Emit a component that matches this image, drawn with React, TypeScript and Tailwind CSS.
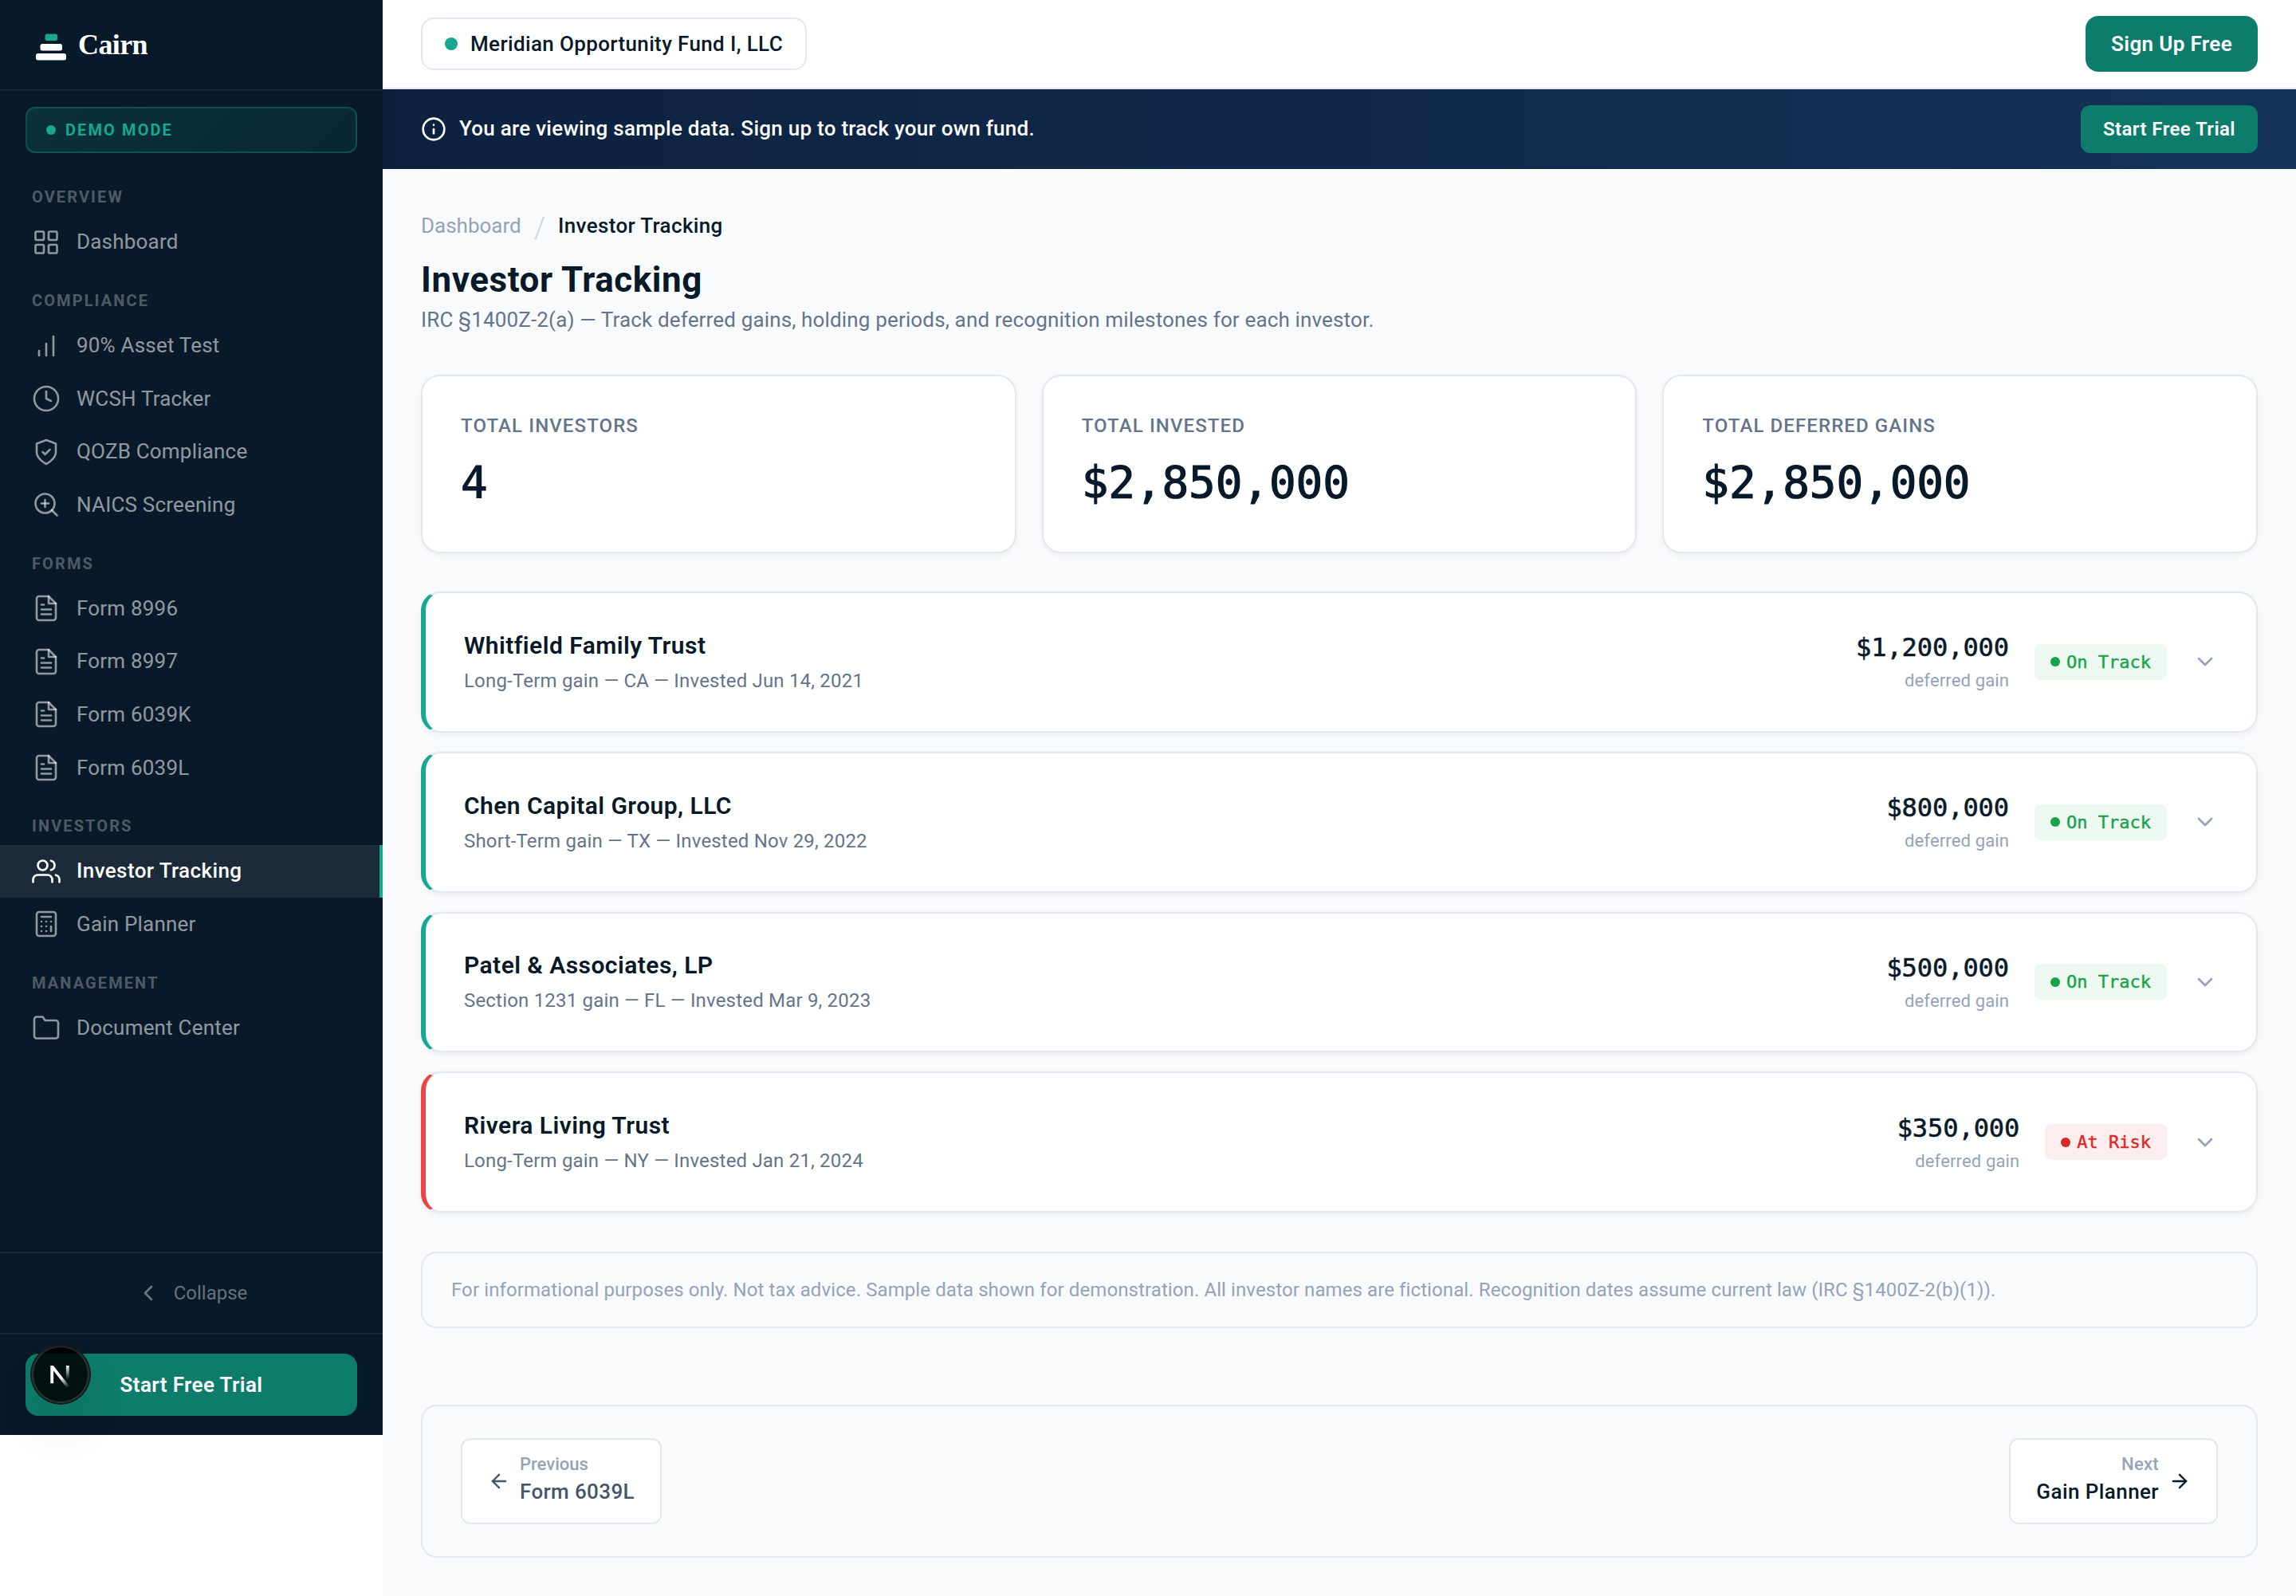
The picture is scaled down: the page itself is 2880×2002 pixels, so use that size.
import React, { useState } from "react";

type NavItem = {
  label: string;
  icon: React.ReactNode;
};

type NavSection = {
  title: string;
  items: NavItem[];
};

type Investor = {
  name: string;
  details: string;
  amount: string;
  status: "On Track" | "At Risk";
};

type IconProps = {
  children: React.ReactNode;
  className?: string;
  strokeWidth?: number;
};

const Icon = ({ children, className = "size-9", strokeWidth = 1.75 }: IconProps) => (
  <svg
    viewBox="0 0 24 24"
    fill="none"
    stroke="currentColor"
    strokeWidth={strokeWidth}
    strokeLinecap="round"
    strokeLinejoin="round"
    className={`shrink-0 ${className}`}
  >
    {children}
  </svg>
);

const FormIcon = () => (
  <Icon>
    <path d="M14 2H6a2 2 0 0 0-2 2v16a2 2 0 0 0 2 2h12a2 2 0 0 0 2-2V8z" />
    <polyline points="14 2 14 8 20 8" />
    <line x1="16" y1="13" x2="8" y2="13" />
    <line x1="16" y1="17" x2="8" y2="17" />
    <line x1="10" y1="9" x2="8" y2="9" />
  </Icon>
);

const sections: NavSection[] = [
  {
    title: "OVERVIEW",
    items: [
      {
        label: "Dashboard",
        icon: (
          <Icon>
            <rect x="3" y="3" width="7" height="7" rx="1" />
            <rect x="14" y="3" width="7" height="7" rx="1" />
            <rect x="3" y="14" width="7" height="7" rx="1" />
            <rect x="14" y="14" width="7" height="7" rx="1" />
          </Icon>
        ),
      },
    ],
  },
  {
    title: "COMPLIANCE",
    items: [
      {
        label: "90% Asset Test",
        icon: (
          <Icon>
            <line x1="12" y1="20" x2="12" y2="10" />
            <line x1="18" y1="20" x2="18" y2="4" />
            <line x1="6" y1="20" x2="6" y2="16" />
          </Icon>
        ),
      },
      {
        label: "WCSH Tracker",
        icon: (
          <Icon>
            <circle cx="12" cy="12" r="10" />
            <polyline points="12 6 12 12 16 14" />
          </Icon>
        ),
      },
      {
        label: "QOZB Compliance",
        icon: (
          <Icon>
            <path d="M12 22s8-4 8-10V5l-8-3-8 3v7c0 6 8 10 8 10z" />
            <path d="M9 12l2 2 4-4" />
          </Icon>
        ),
      },
      {
        label: "NAICS Screening",
        icon: (
          <Icon>
            <circle cx="11" cy="11" r="8" />
            <line x1="21" y1="21" x2="16.65" y2="16.65" />
            <line x1="11" y1="8" x2="11" y2="14" />
            <line x1="8" y1="11" x2="14" y2="11" />
          </Icon>
        ),
      },
    ],
  },
  {
    title: "FORMS",
    items: [
      { label: "Form 8996", icon: <FormIcon /> },
      { label: "Form 8997", icon: <FormIcon /> },
      { label: "Form 6039K", icon: <FormIcon /> },
      { label: "Form 6039L", icon: <FormIcon /> },
    ],
  },
  {
    title: "INVESTORS",
    items: [
      {
        label: "Investor Tracking",
        icon: (
          <Icon>
            <path d="M17 21v-2a4 4 0 0 0-4-4H5a4 4 0 0 0-4 4v2" />
            <circle cx="9" cy="7" r="4" />
            <path d="M23 21v-2a4 4 0 0 0-3-3.87" />
            <path d="M16 3.13a4 4 0 0 1 0 7.75" />
          </Icon>
        ),
      },
      {
        label: "Gain Planner",
        icon: (
          <Icon>
            <rect x="4" y="2" width="16" height="20" rx="2" />
            <line x1="8" y1="6" x2="16" y2="6" />
            <line x1="16" y1="14" x2="16" y2="18" />
            <path d="M16 10h.01M12 10h.01M8 10h.01M12 14h.01M8 14h.01M12 18h.01M8 18h.01" />
          </Icon>
        ),
      },
    ],
  },
  {
    title: "MANAGEMENT",
    items: [
      {
        label: "Document Center",
        icon: (
          <Icon>
            <path d="M22 19a2 2 0 0 1-2 2H4a2 2 0 0 1-2-2V5a2 2 0 0 1 2-2h5l2 3h9a2 2 0 0 1 2 2z" />
          </Icon>
        ),
      },
    ],
  },
];

const stats = [
  { label: "TOTAL INVESTORS", value: "4" },
  { label: "TOTAL INVESTED", value: "$2,850,000" },
  { label: "TOTAL DEFERRED GAINS", value: "$2,850,000" },
];

const investors: Investor[] = [
  {
    name: "Whitfield Family Trust",
    details: "Long-Term gain — CA — Invested Jun 14, 2021",
    amount: "$1,200,000",
    status: "On Track",
  },
  {
    name: "Chen Capital Group, LLC",
    details: "Short-Term gain — TX — Invested Nov 29, 2022",
    amount: "$800,000",
    status: "On Track",
  },
  {
    name: "Patel & Associates, LP",
    details: "Section 1231 gain — FL — Invested Mar 9, 2023",
    amount: "$500,000",
    status: "On Track",
  },
  {
    name: "Rivera Living Trust",
    details: "Long-Term gain — NY — Invested Jan 21, 2024",
    amount: "$350,000",
    status: "At Risk",
  },
];

const DevBadge = () => (
  <div className="absolute left-10 top-[1688px] size-[72px] rounded-full bg-black/85 shadow-[0_0_0_2px_#171717,inset_0_0_0_2px_rgba(255,255,255,0.14),0_32px_64px_-16px_rgba(0,0,0,0.24)]">
    <svg viewBox="0 0 72 72" fill="none" strokeWidth="3.8" className="size-full">
      <defs>
        <linearGradient id="diag" gradientUnits="userSpaceOnUse" x1="37" y1="40" x2="46" y2="52">
          <stop stopColor="#fff" />
          <stop offset="1" stopColor="#fff" stopOpacity="0" />
        </linearGradient>
        <linearGradient id="bar" gradientUnits="userSpaceOnUse" x1="45" y1="25" x2="45" y2="42">
          <stop stopColor="#fff" />
          <stop offset="1" stopColor="#fff" stopOpacity="0" />
        </linearGradient>
      </defs>
      <path d="M25.2 47.2V25" stroke="#fff" />
      <path d="M25.2 25.8L45.6 52" stroke="url(#diag)" />
      <path d="M44.8 25V42" stroke="url(#bar)" />
    </svg>
  </div>
);

const Sidebar = () => {
  const [active, setActive] = useState("Investor Tracking");

  return (
    <aside className="relative flex h-[1800px] w-[480px] shrink-0 flex-col bg-[#081929]">
      <div className="flex h-[114px] items-center gap-[14px] border-b-2 border-white/6 pl-11">
        <svg viewBox="0 0 40 36" className="mt-1 h-9 w-10">
          <rect x="12.5" y="2.5" width="15.5" height="8.5" rx="2.5" fill="#16a890" />
          <rect x="6.5" y="15" width="27.5" height="8.5" rx="2.5" fill="#fff" />
          <rect x="1" y="27" width="38" height="8.5" rx="2.5" fill="#fff" />
        </svg>
        <span className="font-['Liberation_Serif',serif] text-4xl font-bold tracking-[-0.6px] text-white">
          Cairn
        </span>
      </div>

      <div className="mx-8 mt-5 flex h-[58px] shrink-0 items-center gap-3 rounded-xl border-2 border-[#16a890]/30 bg-linear-135 from-[#16a890]/18 to-[#16a890]/10 pl-6">
        <span className="size-3 rounded-full bg-[#16a890]" />
        <span className="text-xl font-bold tracking-[2.1px] text-[#16a890]">DEMO MODE</span>
      </div>

      <nav className="mt-[15.4px]">
        {sections.map((section) => (
          <div key={section.title}>
            <p className="pt-6 pb-1.5 pl-10 text-xl leading-[33.2px] font-bold tracking-[2.1px] text-white/30">
              {section.title}
            </p>
            {section.items.map((item) => (
              <button
                key={item.label}
                type="button"
                onClick={() => setActive(item.label)}
                className={`flex h-[66.6px] w-full items-center gap-5 border-r-4 pl-10 text-[26px] ${
                  active === item.label
                    ? "border-[#16a890] bg-white/8 font-medium tracking-[0.4px] text-white"
                    : "border-transparent tracking-[0.2px] text-white/55"
                }`}
              >
                {item.icon}
                {item.label}
              </button>
            ))}
          </div>
        ))}
      </nav>

      <button
        type="button"
        className="mt-auto flex h-[102px] items-center justify-center gap-4 border-t-2 border-white/6 text-2xl text-white/40"
      >
        <Icon className="size-8" strokeWidth={2}>
          <polyline points="15 18 9 12 15 6" />
        </Icon>
        Collapse
      </button>
      <div className="border-t-2 border-white/6 px-8 py-6">
        <button
          type="button"
          className="h-[78px] w-full rounded-2xl bg-[#0e7c6b] text-[26px] font-semibold tracking-[0.4px] text-white"
        >
          Start Free Trial
        </button>
      </div>
      <DevBadge />
    </aside>
  );
};

const InvestorCard = ({ investor }: { investor: Investor }) => {
  const onTrack = investor.status === "On Track";

  return (
    <div
      className={`flex h-[176.8px] items-center rounded-3xl border-2 border-l-[6px] border-[#e2e8f0] bg-white px-12 shadow-[0_2px_6px_rgba(10,25,41,0.06)] ${
        onTrack ? "border-l-[#16a890]" : "border-l-[#ef4444]"
      }`}
    >
      <div className="pt-[3px] leading-[44px]">
        <h3 className="text-[30px] font-semibold tracking-[0.45px]">{investor.name}</h3>
        <p className="text-2xl leading-[44px] tracking-[0.19px] text-[#64748b]">
          {investor.details}
        </p>
      </div>
      <div className="ml-auto flex items-center gap-8">
        <div className="pt-1.5 text-right">
          <p className="font-['DejaVu_Sans_Mono',monospace] text-[32px] leading-[42px] tracking-[-0.06px] [-webkit-text-stroke:0.6px_currentColor]">
            {investor.amount}
          </p>
          <p className="text-[22px] leading-[42px] tracking-[0.14px] text-[#94a3b8]">
            deferred gain
          </p>
        </div>
        <span
          className={`flex h-[45px] items-center gap-2 rounded-lg px-5 font-['DejaVu_Sans_Mono',monospace] text-[22px] [-webkit-text-stroke:0.4px_currentColor] ${
            onTrack ? "bg-[#16a34a]/8 text-[#16a34a]" : "bg-[#dc2626]/8 text-[#dc2626]"
          }`}
        >
          <span className="size-3 rounded-full bg-current" />
          {investor.status}
        </span>
        <Icon className="size-8 text-[#94a3b8]" strokeWidth={2}>
          <polyline points="6 9 12 15 18 9" />
        </Icon>
      </div>
    </div>
  );
};

const App = () => {
  return (
    <div className="flex min-h-[2002px] bg-white font-['Roboto',sans-serif] text-[#081929]">
      <Sidebar />

      <div className="min-w-0 flex-1 bg-[#f9fafc]">
        <header className="flex h-28 items-center justify-between border-b-2 border-[#e2e8f0] bg-white px-12">
          <div className="flex h-[66px] items-center gap-4 rounded-2xl border-2 border-[#e2e8f0] px-7 text-[26px] font-medium tracking-[0.36px]">
            <span className="size-4 rounded-full bg-[#16a890]" />
            Meridian Opportunity Fund I, LLC
          </div>
          <button
            type="button"
            className="h-[70px] rounded-2xl bg-[#0e7c6b] px-8 text-[26px] font-semibold tracking-[0.36px] text-white"
          >
            Sign Up Free
          </button>
        </header>

        <div className="flex h-[100px] items-center gap-4 bg-linear-to-r from-[#0d213f] to-[#143257] px-12 text-white">
          <Icon className="size-8" strokeWidth={2}>
            <circle cx="12" cy="12" r="10" />
            <line x1="12" y1="16" x2="12" y2="12" />
            <line x1="12" y1="8" x2="12.01" y2="8" />
          </Icon>
          <p className="pb-0.5 text-[26px] font-medium tracking-[0.26px]">
            You are viewing sample data. Sign up to track your own fund.
          </p>
          <button
            type="button"
            className="ml-auto h-[60px] rounded-xl bg-[#0e7c6b] px-7 text-2xl font-semibold tracking-[0.42px]"
          >
            Start Free Trial
          </button>
        </div>

        <main className="px-12 pt-12">
          <div className="flex h-[46px] items-center gap-4 text-[26px]">
            <span className="text-[#94a3b8]">Dashboard</span>
            <span className="mt-1.5 text-4xl font-light text-[#cbd5e1]">/</span>
            <span className="font-medium tracking-[0.35px]">Investor Tracking</span>
          </div>
          <h1 className="mt-4 text-[44px] leading-[58px] font-bold tracking-[0.55px]">
            Investor Tracking
          </h1>
          <p className="text-[26px] leading-[42px] tracking-[0.155px] text-[#64748b]">
            IRC §1400Z-2(a) — Track deferred gains, holding periods, and recognition milestones for
            each investor.
          </p>

          <div className="mt-12 grid grid-cols-3 gap-8">
            {stats.map((stat) => (
              <div
                key={stat.label}
                className="h-[224px] rounded-3xl border-2 border-[#e2e8f0] bg-white p-12 shadow-[0_2px_6px_rgba(10,25,41,0.06)]"
              >
                <p className="text-2xl leading-[28px] font-medium tracking-[1.1px] text-[#64748b]">
                  {stat.label}
                </p>
                <p className="mt-[19px] font-['DejaVu_Sans_Mono',monospace] text-[56px] leading-[75px] tracking-[-0.1px] [-webkit-text-stroke:1.2px_currentColor]">
                  {stat.value}
                </p>
              </div>
            ))}
          </div>

          <div className="mt-12 flex flex-col gap-6">
            {investors.map((investor) => (
              <InvestorCard key={investor.name} investor={investor} />
            ))}
          </div>

          <div className="mt-[48.8px] flex h-24 items-center rounded-[20px] border-2 border-[#e2e8f0] px-9 text-2xl tracking-[0.1px] text-[#94a3b8]">
            For informational purposes only. Not tax advice. Sample data shown for demonstration.
            All investor names are fictional. Recognition dates assume current law (IRC
            §1400Z-2(b)(1)).
          </div>

          <div className="mt-24 flex h-48 items-center justify-between rounded-[20px] border-2 border-[#e2e8f0] px-12">
            <button
              type="button"
              className="flex h-[108px] items-center gap-3 rounded-xl border-2 border-[#e2e8f0] bg-white px-8 text-left text-[#475569]"
            >
              <Icon className="size-7" strokeWidth={2}>
                <line x1="19" y1="12" x2="5" y2="12" />
                <polyline points="12 19 5 12 12 5" />
              </Icon>
              <span className="flex flex-col pb-[7px] font-medium">
                <span className="text-[22px] leading-[35px] text-[#94a3b8]">Previous</span>
                <span className="text-[26px] leading-[35px] tracking-[0.37px]">Form 6039L</span>
              </span>
            </button>
            <button
              type="button"
              className="flex h-[108px] items-center gap-3 rounded-xl border-2 border-[#e2e8f0] bg-white px-8 text-right"
            >
              <span className="flex flex-col pb-[7px] font-medium">
                <span className="text-[22px] leading-[35px] tracking-[0.3px] text-[#94a3b8]">
                  Next
                </span>
                <span className="text-[26px] leading-[35px] tracking-[0.42px]">Gain Planner</span>
              </span>
              <Icon className="size-7" strokeWidth={2}>
                <line x1="5" y1="12" x2="19" y2="12" />
                <polyline points="12 5 19 12 12 19" />
              </Icon>
            </button>
          </div>
        </main>
      </div>
    </div>
  );
};

export default App;
